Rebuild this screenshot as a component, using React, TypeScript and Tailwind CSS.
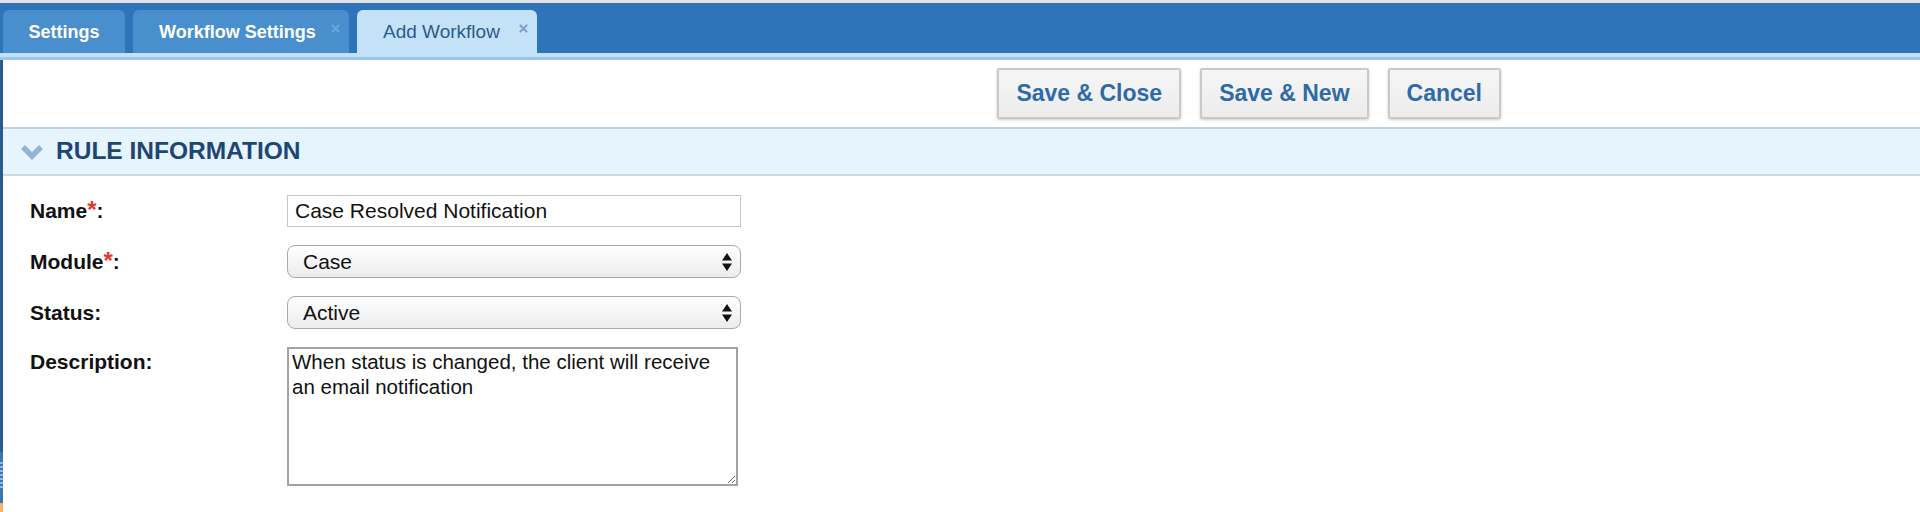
import React from "react";

// ─── Data ─────────────────────────────────────────────────────────────────────
const TABS = [
  { label: "Settings", width: "w-[122px]", active: false, close: false },
  { label: "Workflow Settings", width: "w-[216px]", active: false, close: true },
  { label: "Add Workflow", width: "w-[180px]", active: true, close: true },
];

const BUTTONS = ["Save & Close", "Save & New", "Cancel"];

// ─── Pieces ───────────────────────────────────────────────────────────────────
function Tab({ label, width, active, close }: (typeof TABS)[number]) {
  return (
    <div
      className={`flex h-[43px] ${width} items-center rounded-t-[6px] ${
        active ? "bg-[#c3e2f8] text-[#2c5b8c]" : "bg-[#4a8fcd] text-white"
      } ${close ? "pl-[26px] pr-[9px]" : "justify-center"}`}
    >
      <span className={active ? "text-[19px] leading-[22px]" : "text-[18px] font-bold leading-[22px]"}>{label}</span>
      {close && (
        <svg width="9" height="9" viewBox="0 0 9 9" className="ml-auto -mt-[7px]">
          <path
            d="M1.5 1.5 L7.5 7.5 M7.5 1.5 L1.5 7.5"
            stroke={active ? "#7ea3c9" : "#6aa5dc"}
            strokeWidth="2.2"
            strokeLinecap="round"
          />
        </svg>
      )}
    </div>
  );
}

function Label({ text, required }: { text: string; required?: boolean }) {
  return (
    <div className="w-[257px] shrink-0 text-[21px] font-bold leading-[24px] text-[#111]">
      {text}
      {required && <span className="text-[24px] leading-[20px] text-[#e8362a]">*</span>}:
    </div>
  );
}

function FakeSelect({ value }: { value: string }) {
  return (
    <div className="flex h-[33px] w-[454px] items-center justify-between rounded-[8px] border border-[#a9a9a9] bg-gradient-to-b from-white to-[#ececec] pl-[15px] pr-[8px] text-[21px] text-[#111]">
      <span>{value}</span>
      <svg width="10" height="18" viewBox="0 0 10 18">
        <path d="M5 0 L10 7.5 H0 Z" fill="#111" />
        <path d="M0 10.5 H10 L5 18 Z" fill="#111" />
      </svg>
    </div>
  );
}

// ─── Page ─────────────────────────────────────────────────────────────────────
export default function App() {
  return (
    <div className="flex h-[512px] w-full flex-col overflow-hidden bg-white font-['Liberation_Sans',Arial,Helvetica,sans-serif]">
      {/* Tab bar */}
      <div className="h-[3px] bg-[#e2e2e2]" />
      <div className="flex h-[50px] items-end gap-[8px] bg-[#2f74b9] pl-[3px]">
        {TABS.map((t) => (
          <Tab key={t.label} {...t} />
        ))}
      </div>
      <div className="h-[7px] border-b-[3px] border-[#9cc6ec] bg-[#c3e2f8]" />

      <div className="flex flex-1">
        {/* Left edge strip */}
        <div className="flex w-[3px] flex-col">
          <div className="flex-1 bg-[#2d5a8e]" />
          <div className="h-[10px] bg-[#3b76b2]" />
          <div className="h-[28px] bg-[repeating-linear-gradient(180deg,#93b8dd_0px,#93b8dd_2px,#3b76b2_2px,#3b76b2_4px)]" />
          <div className="h-[13px] bg-[#3b76b2]" />
          <div className="h-[9px] bg-[#f7b560]" />
        </div>

        <div className="flex flex-1 flex-col">
          {/* Actions */}
          <div className="flex justify-end gap-[19px] py-[8px] pr-[419px]">
            {BUTTONS.map((b) => (
              <button
                key={b}
                className="h-[51px] rounded-[2px] border-2 border-[#c9c9c9] bg-gradient-to-b from-[#f6f6f6] to-[#ececec] px-[17px] text-[23px] font-bold text-[#2f6aa8] shadow-[0_1px_3px_rgba(0,0,0,0.2)]"
              >
                {b}
              </button>
            ))}
          </div>

          {/* Section header */}
          <div className="flex h-[49px] items-center gap-[12px] border-y-2 border-t-[#bdd3e1] border-b-[#cbd8e0] bg-[#e6f4fe] pl-[17px]">
            <svg width="24" height="16" viewBox="0 0 24 16">
              <polyline points="3,3 12,12 21,3" fill="none" stroke="#92b3d1" strokeWidth="5.5" strokeLinejoin="miter" />
            </svg>
            <span className="text-[24.5px] font-bold text-[#1e4674]">RULE INFORMATION</span>
          </div>

          {/* Form */}
          <div className="flex flex-col gap-[18px] pl-[27px] pt-[19px]">
            <div className="flex items-center">
              <Label text="Name" required />
              <input
                readOnly
                value="Case Resolved Notification"
                className="h-[32px] w-[454px] border border-[#c6c6c6] px-[7px] text-[21px] text-[#111] outline-none"
              />
            </div>
            <div className="flex items-center">
              <Label text="Module" required />
              <FakeSelect value="Case" />
            </div>
            <div className="flex items-center">
              <Label text="Status" />
              <FakeSelect value="Active" />
            </div>
            <div className="flex items-start">
              <div className="mt-[3px]">
                <Label text="Description" />
              </div>
              <textarea
                readOnly
                value="When status is changed, the client will receive an email notification"
                className="h-[139px] w-[451px] border-2 border-[#a2a2a2] px-[3px] py-0 text-[20.5px] leading-[25px] text-[#111] outline-none"
              />
            </div>
          </div>
        </div>
      </div>
    </div>
  );
}
